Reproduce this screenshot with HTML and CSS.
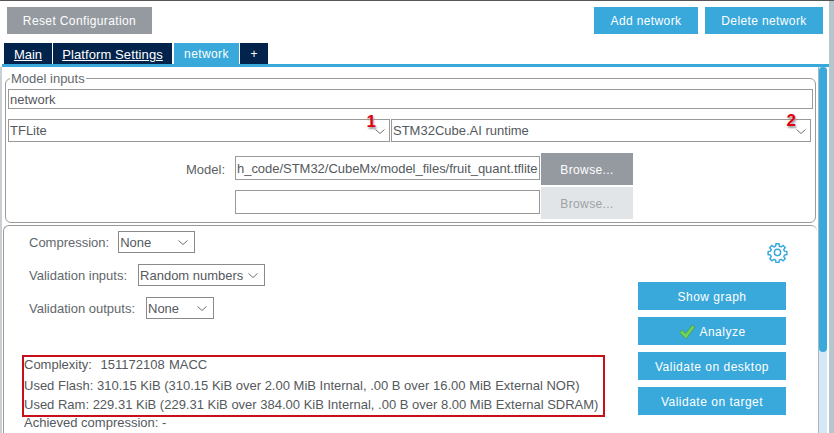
FILE: index.html
```html
<!DOCTYPE html>
<html lang="en">
<head>
<meta charset="utf-8">
<title>network</title>
<link rel="stylesheet" href="styles.css">
</head>
<body>
<div class="app">
  <div class="content">
    <div class="toolbar">
      <button class="btn btn-gray reset">Reset Configuration</button>
      <div class="toolbar-right">
        <button class="btn btn-blue add">Add network</button>
        <button class="btn btn-blue del">Delete network</button>
      </div>
    </div>
    <div class="tabs">
      <a class="tab main">Main</a>
      <a class="tab platform">Platform Settings</a>
      <span class="tab active">network</span>
      <span class="tab plus">+</span>
    </div>
    <div class="body-row">
      <div class="panels">
        <fieldset class="model-inputs">
          <legend>Model inputs</legend>
          <div class="field name-field">network</div>
          <div class="select-row">
            <div class="field sel sel-a">TFLite
              <svg class="chev" viewBox="0 0 10 5"><path d="M.5.5L5 4.5 9.5.5"/></svg>
              <span class="mark mark-1">1</span>
            </div>
            <div class="field sel sel-b">STM32Cube.AI runtime
              <svg class="chev" viewBox="0 0 10 5"><path d="M.5.5L5 4.5 9.5.5"/></svg>
              <span class="mark mark-2">2</span>
            </div>
          </div>
          <div class="model-grid">
            <span class="model-label">Model:</span>
            <div class="field path"><span class="path-text">h_code/STM32/CubeMx/model_files/fruit_quant.tflite</span></div>
            <button class="btn btn-gray browse">Browse...</button>
            <span></span>
            <div class="field path"></div>
            <button class="btn btn-disabled browse">Browse...</button>
          </div>
        </fieldset>
        <section class="analysis">
          <div class="analysis-grid">
            <div class="options">
              <div class="opt opt-1"><label>Compression:</label><div class="combo combo-1">None<svg class="chev" viewBox="0 0 10 5"><path d="M.5.5L5 4.5 9.5.5"/></svg></div></div>
              <div class="opt opt-2"><label>Validation inputs:</label><div class="combo combo-2">Random numbers<svg class="chev" viewBox="0 0 10 5"><path d="M.5.5L5 4.5 9.5.5"/></svg></div></div>
              <div class="opt opt-3"><label>Validation outputs:</label><div class="combo combo-3">None<svg class="chev" viewBox="0 0 10 5"><path d="M.5.5L5 4.5 9.5.5"/></svg></div></div>
              <div class="results">
                <div class="highlight"></div>
                <p class="r1">Complexity:&nbsp; 151172108 MACC</p>
                <p class="r2">Used Flash: 310.15 KiB (310.15 KiB over 2.00 MiB Internal, .00 B over 16.00 MiB External NOR)</p>
                <p class="r3">Used Ram: 229.31 KiB (229.31 KiB over 384.00 KiB Internal, .00 B over 8.00 MiB External SDRAM)</p>
                <p class="r4">Achieved compression: -</p>
              </div>
            </div>
            <div class="actions">
              <svg class="gear" viewBox="0 0 24 24"><path d="M10.3 2h3.4l.5 2.7 1.9.8 2.3-1.6 2.4 2.4-1.6 2.3.8 1.9 2.7.5v3.4l-2.7.5-.8 1.9 1.6 2.3-2.4 2.4-2.3-1.6-1.9.8-.5 2.7h-3.4l-.5-2.7-1.9-.8-2.3 1.6-2.4-2.4 1.6-2.3-.8-1.9-2.7-.5v-3.4l2.7-.5.8-1.9-1.6-2.3 2.4-2.4 2.3 1.6 1.9-.8z"/><circle cx="12" cy="12" r="3.6"/></svg>
              <button class="btn btn-blue act">Show graph</button>
              <button class="btn btn-blue act"><svg class="check" viewBox="0 0 18 16"><path d="M1.5 8.5l3-2.5 3 3.5L14.5 1l2.5 2L8 15z"/></svg>Analyze</button>
              <button class="btn btn-blue act">Validate on desktop</button>
              <button class="btn btn-blue act">Validate on target</button>
            </div>
          </div>
        </section>
      </div>
      <div class="scrollbar"><div class="thumb"></div></div>
    </div>
  </div>
  <div class="edge"></div>
</div>
</body>
</html>
```

FILE: styles.css
```css
* { box-sizing: border-box; }
html, body { margin: 0; height: 100%; overflow: hidden; background: #fff; }
body { font: 13px "Liberation Sans", Arial, sans-serif; color: #5a5f63; }
.app { display: flex; width: 834px; height: 433px; border-top: 1px solid #555; }
.content { width: 829px; flex: none; display: flex; flex-direction: column; min-height: 0; }
.edge { flex: 1; background: #b7c6cd; }
.btn { border: 0; padding: 0; font: 12px "Liberation Sans", Arial, sans-serif; letter-spacing: .38px; color: #fff; display: flex; align-items: center; justify-content: center; }
.btn-gray { background: #949a9f; }
.btn-blue { background: #39a9dc; }
.btn-disabled { background: #e2e5e8; color: #9da2a6; }
.toolbar { display: flex; justify-content: space-between; padding: 6px 6px 0 7px; height: 42px; flex: none; }
.toolbar .btn { height: 27px; }
.reset { width: 145px; }
.toolbar-right { display: flex; gap: 7px; }
.add { width: 104px; }
.del { width: 118px; }
.tabs { display: flex; height: 24px; padding: 0 0 0 4px; border-bottom: 3px solid #39a9dc; margin-left: 2px; flex: none; }
.tab { height: 21px; background: #02234b; color: #fff; font-size: 13px; display: flex; align-items: center; justify-content: center; }
.main { width: 48px; margin-left: -2px; margin-right: 1px; text-decoration: underline; padding-top: 2px; }
.platform { width: 119px; margin-right: 2px; text-decoration: underline; padding-top: 2px; letter-spacing: .1px; }
.active { width: 65px; background: #39a9dc; font-size: 12px; letter-spacing: .4px; margin-right: 1px; }
.plus { width: 28px; font-size: 12px; }
.body-row { display: flex; flex: 1; min-height: 0; border-left: 2px solid #c9cfd3; }
.panels { flex: 1; min-width: 0; display: flex; flex-direction: column; padding: 4px 0 0 1px; }
.scrollbar { width: 9px; margin-left: 1px; border-left: 1px solid #a9b6bd; background: #d5e8f6; flex: none; margin-right: 2px; }
.thumb { height: 285px; background: #39a9dc; border-radius: 4px; }
fieldset, legend { margin: 0; padding: 0; }
.model-inputs { border: 1px solid #9a9a9a; border-radius: 6px; margin: 0 0 0 2px; width: 811px; height: 152px; padding: 0 2px; min-width: 0; }
legend { font-size: 13px; color: #62676b; padding: 0 1px; margin-left: 2px; line-height: 15px; }
.field { border: 1px solid #999; background: #fff; display: flex; align-items: center; color: #55595d; font-size: 13px; padding-left: 1px; position: relative; }
.name-field { height: 20px; margin-top: 3px; width: 805px; }
.select-row { display: flex; gap: 1px; margin-top: 10px; }
.sel { height: 23px; flex: none; }
.sel-a { width: 382px; }
.sel-b { width: 420px; }
.chev { width: 10px; height: 5px; fill: none; stroke: #6d7175; stroke-width: 1; position: absolute; }
.sel .chev { right: 4px; top: 9px; }
.mark { position: absolute; color: #e1000f; font-weight: bold; font-size: 17px; line-height: 18px; text-shadow: 1px 2px 2px #9a9a9a; }
.mark-1 { right: 13px; top: -7px; }
.mark-2 { right: 14px; top: -8px; }
.model-grid { display: grid; grid-template-columns: 227px 306px 92px; grid-template-rows: 32px 32px; row-gap: 2px; margin-top: 11px; }
.model-label { justify-self: end; align-self: center; padding-right: 10px; }
.path { height: 24px; width: 305px; margin-top: 3px; overflow: hidden; letter-spacing: -.03px; }
.path-text { white-space: nowrap; }
.browse { width: 92px; height: 32px; padding-top: 1px; }
.analysis { margin: 2px 0 0 0; border: 1px solid #9a9a9a; border-right: 0; border-bottom: 0; border-radius: 6px 6px 0 0; flex: 1; min-height: 0; width: 814px; overflow: hidden; }
.analysis-grid { display: flex; height: 100%; }
.options { width: 634px; flex: none; padding-top: 5px; }
.opt { display: flex; align-items: center; height: 22px; margin-bottom: 11px; padding-left: 25px; }
.opt label { color: #62676b; }
.combo { position: relative; height: 22px; border: 1px solid #8a8a8a; display: flex; align-items: center; padding-left: 1px; color: #55595d; }
.combo .chev { right: 6px; top: 8px; }
.opt-1 label { margin-right: 9px; }
.opt-2 label { margin-right: 11px; }
.opt-3 label { margin-right: 11px; }
.combo-1 { width: 77px; }
.combo-2 { width: 127px; }
.combo-3 { width: 68px; }
.results { position: relative; margin-top: 38px; padding-left: 20px; color: #55595d; }
.results p { margin: 0; line-height: 15px; white-space: nowrap; }
.r1 { height: 21px; word-spacing: .7px; }
.r2 { height: 19px; }
.r3 { height: 18px; }
.highlight { position: absolute; left: 18px; top: -2px; width: 583px; height: 62px; border: 2px solid #c8101a; }
.actions { flex: 1; display: flex; flex-direction: column; align-items: flex-start; }
.gear { width: 21px; height: 21px; fill: none; stroke: #39a9dc; stroke-width: 1.7; margin: 16px 0 19px 129px; flex: none; }
.act { width: 148px; height: 28px; flex: none; margin-bottom: 7px; padding-top: 1px; letter-spacing: .5px; }
.check { width: 18px; height: 16px; margin-right: 3px; fill: #6fd05c; stroke: #3d9c50; stroke-width: .8; }
```
